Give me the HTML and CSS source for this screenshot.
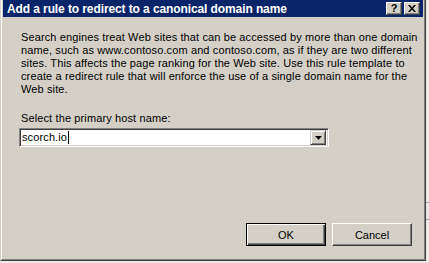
FILE: index.html
```html
<!DOCTYPE html>
<html>
<head>
<meta charset="utf-8">
<link rel="stylesheet" href="styles.css">
</head>
<body>
<div class="backdrop-edge"></div>
<div class="window">
  <div class="frame">
    <div class="titlebar">
      <span class="title">Add a rule to redirect to a canonical domain name</span>
      <div class="caption-buttons">
        <span class="cap-btn help">?</span>
        <span class="cap-btn close">
          <svg width="8" height="7" viewBox="0 0 8 7"><path d="M0 0h2l2 2.5L6 0h2L5 3.5 8 7H6L4 4.5 2 7H0l3-3.5z" fill="#000"/></svg>
        </span>
      </div>
    </div>
    <div class="content">
      <p class="description">Search engines treat Web sites that can be accessed by more than one domain<br>name, such as www.contoso.com and contoso.com, as if they are two different<br>sites. This affects the page ranking for the Web site. Use this rule template to<br>create a redirect rule that will enforce the use of a single domain name for the<br>Web site.</p>
      <label class="field-label">Select the primary host name:</label>
      <div class="combo">
        <span class="combo-text">scorch.io<span class="caret"></span></span>
        <span class="combo-btn">
          <svg width="7" height="4" viewBox="0 0 7 4"><path d="M0 0h7L3.5 4z" fill="#000"/></svg>
        </span>
      </div>
      <div class="actions">
        <button class="btn default">OK</button>
        <button class="btn">Cancel</button>
      </div>
    </div>
  </div>
</div>
</body>
</html>
```
FILE: styles.css
```css
html, body {
  margin: 0;
  padding: 0;
}
body {
  width: 429px;
  height: 263px;
  background: #ecebe8;
  position: relative;
  overflow: hidden;
  font-family: "Liberation Sans", Arial, sans-serif;
  font-size: 11px;
  color: #000;
}
.backdrop-edge {
  position: absolute;
  left: 425px;
  top: 202px;
  width: 6px;
  height: 16px;
  border: 1px solid #9a9a9a;
  background: #e6e6e6;
}
.window {
  position: relative;
  width: 426px;
  height: 261px;
  box-sizing: border-box;
  border-left: 1px solid #d4d0c8;
  border-right: 1px solid #404040;
  border-bottom: 1px solid #404040;
  background: #d4d0c8;
}
.frame {
  height: 100%;
  box-sizing: border-box;
  border-left: 1px solid #ffffff;
  border-right: 1px solid #808080;
  border-bottom: 1px solid #808080;
  padding: 0 1px 1px 1px;
  display: flex;
  flex-direction: column;
}
.titlebar {
  height: 17px;
  background: #0a246a;
  display: flex;
  align-items: center;
  justify-content: space-between;
  padding: 0 3px 0 4px;
  flex: none;
}
.title {
  color: #fff;
  font-weight: bold;
  font-size: 12px;
  letter-spacing: -0.1px;
  white-space: nowrap;
}
.caption-buttons {
  display: flex;
  gap: 2px;
}
.cap-btn {
  width: 16px;
  height: 13px;
  box-sizing: border-box;
  background: #d4d0c8;
  border-top: 1px solid #fff;
  border-left: 1px solid #fff;
  border-right: 1px solid #404040;
  border-bottom: 1px solid #404040;
  box-shadow: inset -1px -1px 0 #808080;
  display: flex;
  align-items: center;
  justify-content: center;
  font-weight: bold;
  font-size: 11px;
  line-height: 1;
}
.content {
  flex: 1;
  display: flex;
  flex-direction: column;
  padding: 14px 11px 12px 18px;
}
.description {
  margin: 0;
  line-height: 13px;
  letter-spacing: 0.12px;
  white-space: nowrap;
}
.field-label {
  margin-top: 16px;
  line-height: 13px;
  letter-spacing: 0.12px;
}
.combo {
  margin-top: 3px;
  margin-left: -2px;
  width: 310px;
  height: 19px;
  box-sizing: border-box;
  background: #fff;
  border-top: 1px solid #808080;
  border-left: 1px solid #808080;
  border-right: 1px solid #fff;
  border-bottom: 1px solid #fff;
  box-shadow: inset 1px 1px 0 #404040, inset -1px -1px 0 #d4d0c8;
  display: flex;
  align-items: center;
  justify-content: space-between;
  padding: 2px 2px 2px 2px;
}
.combo-text {
  display: flex;
  align-items: center;
  font-size: 11px;
  line-height: 13px;
  letter-spacing: 0.12px;
}
.caret {
  width: 1px;
  height: 13px;
  background: #000;
  margin-left: 1px;
}
.combo-btn {
  width: 16px;
  height: 15px;
  box-sizing: border-box;
  background: #d4d0c8;
  border-top: 1px solid #d4d0c8;
  border-left: 1px solid #d4d0c8;
  border-right: 1px solid #404040;
  border-bottom: 1px solid #404040;
  box-shadow: inset 1px 1px 0 #fff, inset -1px -1px 0 #808080;
  display: flex;
  align-items: center;
  justify-content: center;
}
.actions {
  margin-top: auto;
  display: flex;
  justify-content: flex-end;
  gap: 6px;
}
.btn {
  width: 80px;
  height: 23px;
  box-sizing: border-box;
  background: #d4d0c8;
  font-family: "Liberation Sans", Arial, sans-serif;
  font-size: 11px;
  color: #000;
  border-top: 1px solid #fff;
  border-left: 1px solid #fff;
  border-right: 1px solid #404040;
  border-bottom: 1px solid #404040;
  box-shadow: inset -1px -1px 0 #808080;
  padding: 0;
}
.btn.default {
  border: 1px solid #000;
  box-shadow: inset 1px 1px 0 #fff, inset -1px -1px 0 #404040, inset -2px -2px 0 #808080;
}
```
